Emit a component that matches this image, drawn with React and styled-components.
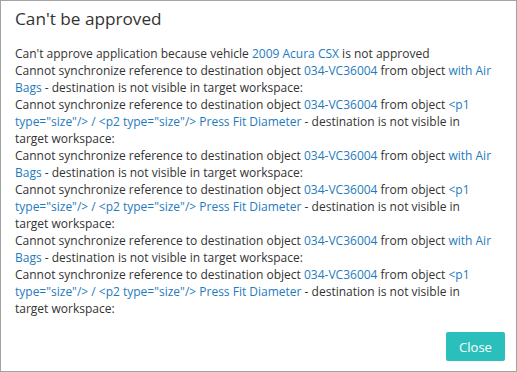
import React from 'react';
import styled, { createGlobalStyle } from 'styled-components';

const GlobalStyle = createGlobalStyle`
  html, body {
    margin: 0;
    padding: 0;
    background: #ffffff;
  }
  body {
    font-family: 'Segoe UI', 'Open Sans', sans-serif;
  }
`;

const Dialog = styled.div`
  box-sizing: border-box;
  width: 517px;
  height: 372px;
  border: 1px solid #a3a3a3;
  background: #fff;
  display: flex;
  flex-direction: column;
  padding: 0 11px 10px 14px;
`;

const Title = styled.h2`
  margin: 6px 0 0;
  font-size: 17.2px;
  font-weight: 400;
  line-height: 24px;
  color: #333;
`;

const Body = styled.div`
  margin-top: 14px;
  padding-right: 9px;
  font-size: 12px;
  line-height: 17px;
  color: #333;
  flex: 1;
`;

const Message = styled.div``;

const Ref = styled.span`
  color: #1f7bbd;
`;

const Footer = styled.div`
  display: flex;
  justify-content: flex-end;
`;

const Button = styled.button`
  box-sizing: border-box;
  width: 59px;
  height: 29px;
  border: none;
  border-radius: 2px;
  background: #2bbfbb;
  color: #fff;
  font-family: inherit;
  font-size: 13px;
  cursor: pointer;
`;

const sync = [
  { target: 'with Air Bags' },
  { target: '<p1 type="size"/> / <p2 type="size"/> Press Fit Diameter' },
];

function SyncMessage({ target }) {
  return (
    <Message>
      Cannot synchronize reference to destination object <Ref>034-VC36004</Ref> from object{' '}
      <Ref>{target}</Ref> - destination is not visible in target workspace:
    </Message>
  );
}

export default function App() {
  return (
    <>
      <GlobalStyle />
      <Dialog>
        <Title>Can't be approved</Title>
        <Body>
          <Message>
            Can't approve application because vehicle <Ref>2009 Acura CSX</Ref> is not approved
          </Message>
          {[0, 1, 2].map(i =>
            sync.map((s, j) => <SyncMessage key={`${i}-${j}`} target={s.target} />)
          )}
        </Body>
        <Footer>
          <Button>Close</Button>
        </Footer>
      </Dialog>
    </>
  );
}
